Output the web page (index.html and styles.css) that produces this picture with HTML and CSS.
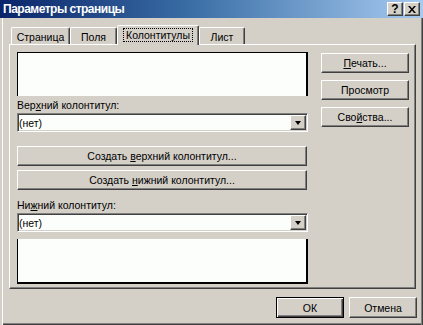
FILE: index.html
```html
<!DOCTYPE html>
<html lang="ru">
<head>
  <meta charset="UTF-8" />
  <title>Параметры страницы</title>
  <link rel="stylesheet" href="styles.css">
</head>
<body>
  <div class="window">
    <div class="titlebar">
      <span class="title">Параметры страницы</span>
      <div class="caption-buttons">
        <button class="cap-btn help">?</button>
        <button class="cap-btn close">
          <svg width="8" height="7" viewBox="0 0 8 7">
            <path d="M0 0h2l2 2.5L6 0h2L5 3.5 8 7H6L4 4.5 2 7H0l3-3.5z" fill="#000"/>
          </svg>
        </button>
      </div>
    </div>

    <div class="client">
      <div class="tabs">
        <div class="tab tab-page">Страница</div>
        <div class="tab tab-margins">Поля</div>
        <div class="tab tab-headers active"><span class="focus">Колонтитулы</span></div>
        <div class="tab tab-sheet">Лист</div>
      </div>

      <div class="panel">
        <div class="left-col">
          <div class="preview preview-top"></div>

          <div class="field-label label-top">Вер<u>х</u>ний колонтитул:</div>
          <div class="combo">
            <span class="combo-value">(нет)</span>
            <span class="drop-btn"><span class="arrow"></span></span>
          </div>

          <button class="btn wide btn-first">Создать <u>в</u>ерхний колонтитул...</button>
          <button class="btn wide btn-second">Создать <u>н</u>ижний колонтитул...</button>

          <div class="field-label label-bottom">Ни<u>ж</u>ний колонтитул:</div>
          <div class="combo">
            <span class="combo-value">(нет)</span>
            <span class="drop-btn"><span class="arrow"></span></span>
          </div>

          <div class="preview preview-bottom"></div>
        </div>

        <div class="right-col">
          <button class="btn side"><u>П</u>ечать...</button>
          <button class="btn side">Просмотр</button>
          <button class="btn side">Сво<u>й</u>ства...</button>
        </div>
      </div>

      <div class="dialog-buttons">
        <button class="btn dlg default">ОК</button>
        <button class="btn dlg">Отмена</button>
      </div>
    </div>
  </div>
</body>
</html>
```

FILE: styles.css
```css
body {
  margin: 0;
  padding: 0;
  background: #d4d0c8;
  font-family: "Liberation Sans", Arial, sans-serif;
  font-size: 10.5px;
  color: #000;
}

.window {
  width: 423px;
  height: 325px;
  display: flex;
  flex-direction: column;
  background: #d4d0c8;
  overflow: hidden;
}

/* title bar */
.titlebar {
  height: 18px;
  flex: none;
  display: flex;
  align-items: center;
  justify-content: space-between;
  background: linear-gradient(to right, #0a246a 0%, #3a6ea5 45%, #a6caf0 100%);
}

.title {
  padding-left: 3px;
  color: #fff;
  font-weight: bold;
  font-size: 12px;
  letter-spacing: -0.5px;
}

.caption-buttons {
  display: flex;
  gap: 1px;
  margin-right: 3px;
}

.cap-btn {
  width: 16px;
  height: 14px;
  padding: 0;
  margin: 0;
  display: flex;
  align-items: center;
  justify-content: center;
  background: #d4d0c8;
  border: 1px solid;
  border-color: #fff #404040 #404040 #fff;
  box-shadow: inset -1px -1px 0 #808080;
  font-family: "Liberation Sans", Arial, sans-serif;
  font-weight: bold;
  font-size: 12px;
  line-height: 12px;
  color: #000;
}

/* client area */
.client {
  flex: 1;
  padding: 7px 7px 0 9px;
  box-shadow: inset 2px 0 0 #d4d0c8, inset 3px 0 0 #fff,
              inset -1px 0 0 #404040, inset -2px 0 0 #808080,
              inset 0 -1px 0 #404040, inset 0 -2px 0 #808080;
}

/* tabs */
.tabs {
  display: flex;
  align-items: flex-end;
  height: 19px;
  padding-left: 2px;
}

.tab {
  box-sizing: border-box;
  height: 17px;
  display: flex;
  align-items: center;
  justify-content: center;
  border-top: 1px solid #fff;
  border-left: 1px solid #fff;
  border-right: 1px solid #404040;
  border-radius: 2px 2px 0 0;
  box-shadow: inset -1px 0 0 #808080;
  padding-top: 1px;
}

.tab-page { width: 59px; }
.tab-margins { width: 47px; }
.tab-headers { width: 82px; }
.tab-sheet { width: 46px; }

.tab.active {
  height: 20px;
  margin-bottom: -1px;
  position: relative;
  z-index: 1;
  background: #d4d0c8;
  padding-bottom: 2px;
}

.focus {
  outline: 1px dotted #000;
  outline-offset: 0;
  padding: 0 2px;
  line-height: 12px;
}

/* main panel */
.panel {
  box-sizing: border-box;
  display: flex;
  gap: 13px;
  padding: 7px 6px 4px 7px;
  border-top: 1px solid #fff;
  border-left: 1px solid #fff;
  border-right: 1px solid #404040;
  border-bottom: 1px solid #404040;
  box-shadow: inset -1px -1px 0 #808080;
}

.left-col {
  width: 291px;
  display: flex;
  flex-direction: column;
}

.right-col {
  width: 88px;
  display: flex;
  flex-direction: column;
  gap: 7px;
  padding-top: 1px;
}

.preview {
  box-sizing: border-box;
  background: #fcfefc;
}

.preview-top {
  height: 44px;
  border-top: 1px solid #000;
  border-left: 1px solid #000;
  border-right: 2px solid #000;
}

.preview-bottom {
  height: 45px;
  margin-top: 7px;
  border-left: 1px solid #000;
  border-right: 2px solid #000;
  border-bottom: 2px solid #000;
}

.field-label {
  display: flex;
  align-items: flex-end;
  line-height: 12px;
  padding-bottom: 2px;
  box-sizing: border-box;
}

.label-top { height: 17px; }
.label-bottom { height: 23px; }

u {
  text-decoration: underline;
  text-underline-offset: 1px;
}

/* combo box */
.combo {
  box-sizing: border-box;
  height: 19px;
  display: flex;
  align-items: stretch;
  background: #fcfefc;
  border: 1px solid;
  border-color: #808080 #fff #fff #808080;
  box-shadow: inset 1px 1px 0 #404040, inset -1px -1px 0 #d4d0c8;
}

.combo-value {
  flex: 1;
  display: flex;
  align-items: center;
  padding-left: 1px;
}

.drop-btn {
  box-sizing: border-box;
  width: 16px;
  margin: 1px 1px 1px 0;
  display: flex;
  align-items: center;
  justify-content: center;
  background: #d4d0c8;
  border: 1px solid;
  border-color: #fff #404040 #404040 #fff;
  box-shadow: inset -1px -1px 0 #808080;
}

.arrow {
  width: 0;
  height: 0;
  border-left: 3.5px solid transparent;
  border-right: 3.5px solid transparent;
  border-top: 4px solid #000;
}

/* buttons */
.btn {
  box-sizing: border-box;
  margin: 0;
  padding: 0;
  background: #d4d0c8;
  border: 1px solid;
  border-color: #fff #404040 #404040 #fff;
  box-shadow: inset -1px -1px 0 #808080;
  font-family: inherit;
  font-size: inherit;
  color: #000;
  text-align: center;
}

.btn.wide {
  width: 290px;
  height: 20px;
}

.btn-first { margin-top: 14px; }
.btn-second { margin-top: 4px; }

.btn.side {
  height: 20px;
  width: 88px;
}

.dialog-buttons {
  display: flex;
  justify-content: flex-end;
  gap: 5px;
  margin-top: 8px;
  margin-right: -1px;
}

.btn.dlg {
  width: 68px;
  height: 21px;
}

.btn.default {
  border: 1px solid #000;
  box-shadow: inset 1px 1px 0 #fff, inset -1px -1px 0 #404040, inset -2px -2px 0 #808080;
}
```
